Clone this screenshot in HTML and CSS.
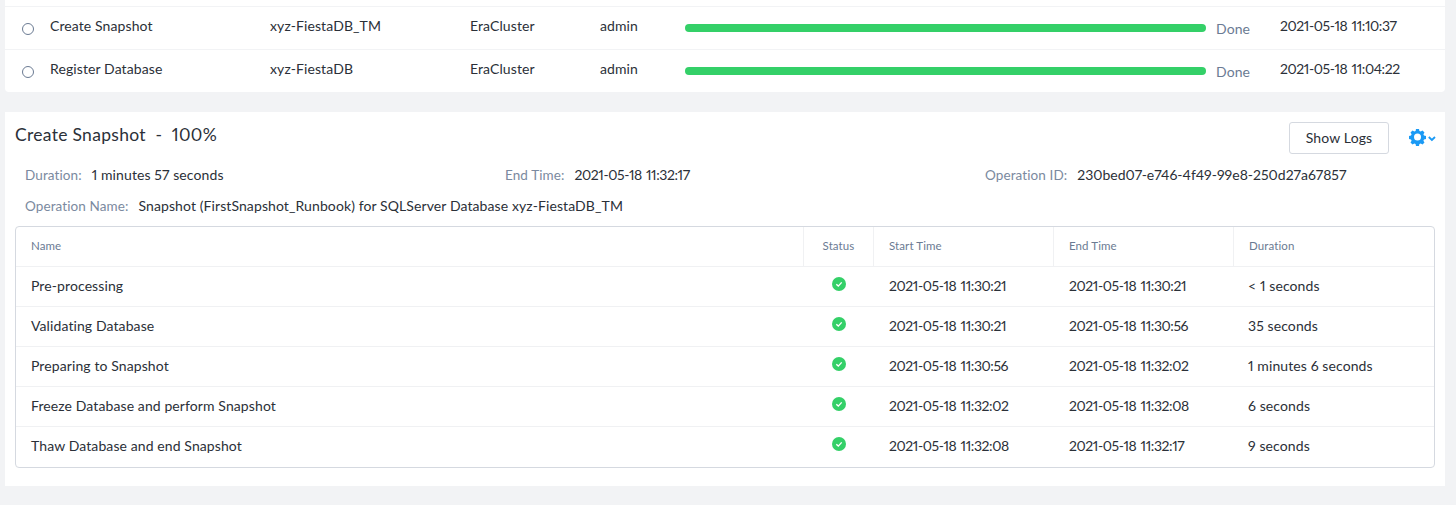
FILE: index.html
```html
<!DOCTYPE html>
<html lang="en">
<head>
    <meta charset="UTF-8">
    <title>Operations</title>
    <link rel="stylesheet" href="styles.css">
</head>
<body>
<div class="ops-card">
    <div class="ops-row">
        <span class="radio"></span>
        <span>Create Snapshot</span>
        <span>xyz-FiestaDB_TM</span>
        <span>EraCluster</span>
        <span>admin</span>
        <span class="bar"></span>
        <span class="done">Done</span>
        <span class="date">2021-05-18 11:10:37</span>
    </div>
    <div class="ops-row">
        <span class="radio"></span>
        <span>Register Database</span>
        <span>xyz-FiestaDB</span>
        <span>EraCluster</span>
        <span>admin</span>
        <span class="bar"></span>
        <span class="done">Done</span>
        <span class="date">2021-05-18 11:04:22</span>
    </div>
</div>

<div class="detail-card">
    <div class="detail-head">
        <h2>Create Snapshot &nbsp;-&nbsp; 100%</h2>
        <button class="logs-btn">Show Logs</button>
        <svg class="gear" width="28" height="18" viewBox="0 0 28 18">
            <path fill="#1b9af5" fill-rule="evenodd" d="M7 1h3l.4 2 1.300.6 1.800-1.100 2 2-1.100 1.800.6 1.300 2 .4v3l-2 .4-.6 1.300 1.100 1.800-2 2-1.800-1.100-1.300.6-.4 2H7l-.4-2-1.300-.6-1.800 1.100-2-2 1.100-1.800-.6-1.300-2-.4v-3l2-.4.6-1.300-1.100-1.800 2-2 1.800 1.100 1.300-.6z M8.500 5.500a3.500 3.500 0 1 0 0 7 3.500 3.500 0 0 0 0-7z"/>
            <path fill="none" stroke="#1b9af5" stroke-width="1.800" d="M19.800 9l3.100 3 3.100-3"/>
        </svg>
    </div>

    <div class="meta-row">
        <div class="meta meta-a"><span class="meta-label">Duration:</span><span>1 minutes 57 seconds</span></div>
        <div class="meta meta-b"><span class="meta-label">End Time:</span><span class="date">2021-05-18 11:32:17</span></div>
        <div class="meta"><span class="meta-label">Operation ID:</span><span class="op-id">230bed07-e746-4f49-99e8-250d27a67857</span></div>
    </div>
    <div class="meta-row meta-row2">
        <div class="meta"><span class="meta-label">Operation Name:</span><span>Snapshot (FirstSnapshot_Runbook) for SQLServer Database xyz-FiestaDB_TM</span></div>
    </div>

    <div class="steps">
        <div class="steps-row steps-head">
            <div>Name</div>
            <div class="status-col">Status</div>
            <div>Start Time</div>
            <div>End Time</div>
            <div>Duration</div>
        </div>
        <div class="steps-row">
            <div>Pre-processing</div>
            <div class="status-col"><svg class="ok" viewBox="0 0 14 14"><circle cx="7" cy="7" r="7" fill="#34d068"/><path d="M4.300 7.200l2 1.900 3.400-3.700" fill="none" stroke="#fff" stroke-width="1.400"/></svg></div>
            <div class="date">2021-05-18 11:30:21</div>
            <div class="date">2021-05-18 11:30:21</div>
            <div>&lt; 1 seconds</div>
        </div>
        <div class="steps-row">
            <div>Validating Database</div>
            <div class="status-col"><svg class="ok" viewBox="0 0 14 14"><circle cx="7" cy="7" r="7" fill="#34d068"/><path d="M4.300 7.200l2 1.900 3.400-3.700" fill="none" stroke="#fff" stroke-width="1.400"/></svg></div>
            <div class="date">2021-05-18 11:30:21</div>
            <div class="date">2021-05-18 11:30:56</div>
            <div>35 seconds</div>
        </div>
        <div class="steps-row">
            <div>Preparing to Snapshot</div>
            <div class="status-col"><svg class="ok" viewBox="0 0 14 14"><circle cx="7" cy="7" r="7" fill="#34d068"/><path d="M4.300 7.200l2 1.900 3.400-3.700" fill="none" stroke="#fff" stroke-width="1.400"/></svg></div>
            <div class="date">2021-05-18 11:30:56</div>
            <div class="date">2021-05-18 11:32:02</div>
            <div>1 minutes 6 seconds</div>
        </div>
        <div class="steps-row">
            <div>Freeze Database and perform Snapshot</div>
            <div class="status-col"><svg class="ok" viewBox="0 0 14 14"><circle cx="7" cy="7" r="7" fill="#34d068"/><path d="M4.300 7.200l2 1.900 3.400-3.700" fill="none" stroke="#fff" stroke-width="1.400"/></svg></div>
            <div class="date">2021-05-18 11:32:02</div>
            <div class="date">2021-05-18 11:32:08</div>
            <div>6 seconds</div>
        </div>
        <div class="steps-row">
            <div>Thaw Database and end Snapshot</div>
            <div class="status-col"><svg class="ok" viewBox="0 0 14 14"><circle cx="7" cy="7" r="7" fill="#34d068"/><path d="M4.300 7.200l2 1.900 3.400-3.700" fill="none" stroke="#fff" stroke-width="1.400"/></svg></div>
            <div class="date">2021-05-18 11:32:08</div>
            <div class="date">2021-05-18 11:32:17</div>
            <div>9 seconds</div>
        </div>
    </div>
</div>
</body>
</html>
```

FILE: styles.css
```css
body {
    margin: 0;
    padding: 0 11px 0 5px;
    height: 505px;
    overflow: hidden;
    box-sizing: border-box;
    background-color: #f2f3f5;
    font-family: Lato, "Open Sans", sans-serif;
    font-size: 14px;
    font-variant-numeric: proportional-nums;
    letter-spacing: 0.1px;
    color: #2b3038;
}

.date {
    letter-spacing: -0.42px;
    word-spacing: 1px;
}

.op-id {
    letter-spacing: 0;
}

.ops-card {
    background-color: #ffffff;
    border-radius: 0 0 4px 4px;
    padding-top: 6px;
    height: 86px;
}

.ops-row {
    display: grid;
    grid-template-columns: 45px 220px 200px 130px 85px 521px 74px 1fr;
    height: 43px;
    box-sizing: border-box;
    border-top: 1px solid #f2f3f5;
    line-height: 38px;
    white-space: nowrap;
}

.radio {
    box-sizing: border-box;
    width: 12px;
    height: 12px;
    margin: 16px 0 0 17px;
    border: 1px solid #6b7b93;
    border-radius: 50%;
}

.bar {
    height: 8px;
    margin-top: 17px;
    border-radius: 4px;
    background-color: #34d068;
}

.done {
    color: #6b7b93;
    padding: 3px 0 0 10px;
}

.detail-card {
    margin-top: 20px;
    background-color: #ffffff;
    height: 374px;
    padding: 0 10px;
    box-sizing: border-box;
}

.detail-head {
    display: flex;
    align-items: center;
    height: 52px;
}

.detail-head h2 {
    flex: 1;
    margin: 0 0 8px;
    font-size: 17.500px;
    font-weight: 400;
    letter-spacing: 0.3px;
}

.logs-btn {
    width: 100px;
    height: 32px;
    margin: 0 20px 0 0;
    padding-bottom: 3px;
    background-color: #ffffff;
    border: 1px solid #d5d9e0;
    border-radius: 3px;
    font-family: inherit;
    font-size: 14px;
    letter-spacing: 0.15px;
    color: #2b3038;
}

.gear {
    flex: none;
    margin: 0 -2px 3px 0;
}

.meta-row {
    display: flex;
    height: 20px;
    margin-top: 1px;
    padding-left: 10px;
    line-height: 20px;
    white-space: nowrap;
}

.meta-row2 {
    margin-top: 11px;
}

.meta {
    display: flex;
    gap: 10px;
}

.meta-a {
    width: 480px;
}

.meta-b {
    width: 480px;
}

.meta-label {
    color: #7b8aa0;
    font-size: 13.500px;
}

.steps {
    margin-top: 10px;
    height: 242px;
    box-sizing: border-box;
    border: 1px solid #d5d9e0;
    border-radius: 4px;
}

.steps-row {
    display: grid;
    grid-template-columns: 787px 70px 180px 180px 1fr;
    height: 40px;
    border-top: 1px solid #f0f1f3;
    box-sizing: border-box;
}

.steps-row > div {
    padding-left: 15px;
    line-height: 38px;
    white-space: nowrap;
}

.steps-row > .date {
    padding-left: 16px;
}

.steps-head {
    height: 39px;
    border-top: 0;
    color: #6b7b93;
    font-size: 11.500px;
}

.steps-head > div + div {
    border-left: 1px solid #f0f1f3;
}

.steps-row > .status-col {
    padding-left: 0;
    text-align: center;
}

.ok {
    width: 14px;
    height: 14px;
    margin-top: 10px;
    margin-left: 1px;
    vertical-align: top;
}
```
